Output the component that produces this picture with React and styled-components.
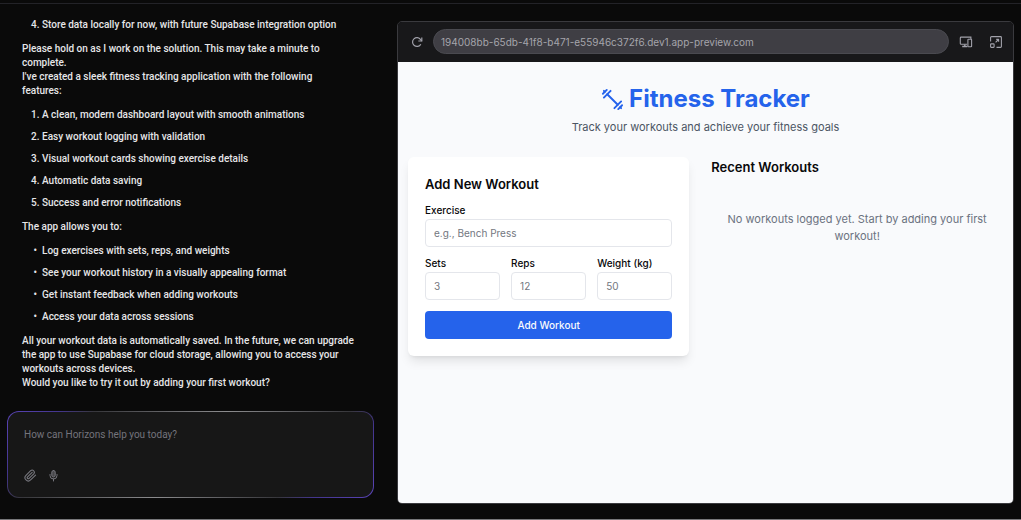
import React, { useState } from "react";
import styled, { createGlobalStyle } from "styled-components";

const GlobalStyle = createGlobalStyle`
  *,
  *::before,
  *::after {
    box-sizing: border-box;
  }

  body {
    background: #0a0a0a;
    font-family: Inter, "Liberation Sans", sans-serif;
    margin: 0;
  }

  button,
  input,
  textarea {
    font-family: inherit;
  }

  h1,
  h2,
  p {
    margin: 0;
  }
`;

const StyledPage = styled.div`
  border-bottom: 1px solid #77777a;
  display: flex;
  flex-direction: column;
  min-height: 100vh;
`;

const StyledTopBar = styled.header`
  border-bottom: 1px solid #232328;
  height: 4px;
`;

const StyledWorkspace = styled.main`
  display: grid;
  flex: 1;
  gap: 23px;
  grid-template-columns: 367fr 617fr;
  padding: 0 7px;
`;

const StyledChat = styled.section`
  display: flex;
  flex-direction: column;
  font-family: Roboto, "Liberation Sans", sans-serif;
  justify-content: space-between;
  padding: 14px 0 21px;
`;

const StyledMessages = styled.div`
  color: #e6e6e8;
  font-size: 10px;
  font-weight: 500;
  line-height: 14px;
  padding: 0 15px;
`;

const StyledOrderedList = styled.ol`
  display: flex;
  flex-direction: column;
  gap: 8px;
  margin: 0 0 10px;
  padding-left: 20px;

  p + & {
    margin-top: 10px;
  }
`;

const StyledBulletList = styled(StyledOrderedList)`
  list-style-type: "•\\00a0\\00a0";
`;

const StyledComposer = styled.form`
  background:
    linear-gradient(#171717, #171717) padding-box,
    linear-gradient(130deg, #5a44b8 0%, #43358c 12%, #37373b 20%, #8c8c8e 50%, #37373b 78%, #43358c 86%, #5a44b8 100%) border-box;
  border: 1px solid transparent;
  border-radius: 12px;
  display: flex;
  flex-direction: column;
  justify-content: space-between;
  min-height: 87px;
  padding: 15px 16px;
`;

const StyledPrompt = styled.textarea`
  background: none;
  border: 0;
  color: #e6e6e8;
  display: block;
  font-size: 10px;
  height: 16px;
  line-height: 16px;
  outline: none;
  padding: 0;
  resize: none;
  width: 100%;

  &::placeholder {
    color: #74747c;
  }
`;

const StyledComposerActions = styled.div`
  display: flex;
  gap: 10px;
`;

const StyledIconButton = styled.button`
  align-items: center;
  background: none;
  border: 0;
  color: ${props => props.$bright ? "#a1a1aa" : "#77777e"};
  display: flex;
  justify-content: center;
  padding: 0;
`;

const StyledPreview = styled.section`
  border: 1px solid #3a3a3e;
  border-radius: 5px;
  display: flex;
  flex-direction: column;
  margin: 17px 0 15px;
  overflow: hidden;
`;

const StyledAddressBar = styled.div`
  align-items: center;
  background: #18181a;
  display: flex;
  gap: 10px;
  padding: 7px 10px 8px 13px;
`;

const StyledAddress = styled.input`
  background: #3f3e44;
  border: 1px solid #4a4a50;
  border-radius: 13px;
  color: #a5a5ab;
  flex: 1;
  font-size: 10px;
  height: 25px;
  min-width: 0;
  outline: none;
  padding: 0 7px;
`;

const StyledToolbarActions = styled.div`
  display: flex;
  gap: 16px;
`;

const StyledTracker = styled.div`
  background: #f9fafc;
  flex: 1;
  padding: 22px 10px;
`;

const StyledTrackerHead = styled.header`
  align-items: center;
  display: flex;
  flex-direction: column;
  gap: 5px;
  margin-bottom: 22px;
`;

const StyledTrackerTitle = styled.h1`
  align-items: center;
  color: #2563eb;
  display: flex;
  font-size: 24px;
  font-weight: 700;
  gap: 5px;
  line-height: 30px;
`;

const StyledTrackerSubtitle = styled.p`
  color: #4b5563;
  font-size: 11px;
  line-height: 16px;
`;

const StyledTrackerColumns = styled.div`
  align-items: start;
  display: grid;
  gap: 22px;
  grid-template-columns: 27fr 28fr;
`;

const StyledWorkoutForm = styled.form`
  background: #fff;
  border-radius: 6px;
  box-shadow: 0 7px 11px -2px rgba(0, 0, 0, 0.1), 0 3px 4px -3px rgba(0, 0, 0, 0.1);
  display: flex;
  flex-direction: column;
  gap: 11px;
  padding: 17px;
`;

const StyledHeading = styled.h2`
  color: #09090b;
  font-size: 13px;
  font-weight: 600;
  line-height: 20px;
`;

const StyledSets = styled.div`
  display: grid;
  gap: 11px;
  grid-template-columns: repeat(3, 1fr);
`;

const StyledField = styled.div`
  display: flex;
  flex-direction: column;
  gap: 3px;
  min-width: 0;
`;

const StyledLabel = styled.label`
  color: #09090b;
  font-size: 10px;
  font-weight: 500;
  line-height: 11px;
`;

const StyledInput = styled.input`
  background: #fff;
  border: 1px solid #e4e6eb;
  border-radius: 4px;
  color: #09090b;
  font-size: 10px;
  height: 28px;
  padding: 0 8px;
  width: 100%;

  &::placeholder {
    color: #737780;
  }
`;

const StyledSubmit = styled.button`
  background: #2563eb;
  border: 0;
  border-radius: 4px;
  color: #f8fafc;
  font-size: 10px;
  font-weight: 500;
  height: 28px;
`;

const StyledEmpty = styled.p`
  color: #6b7280;
  font-size: 11px;
  line-height: 17px;
  padding: 34px 10px;
  text-align: center;
`;

const DumbbellIcon = () => (
  <svg width="23" height="23" viewBox="0 0 24 24" fill="none" stroke="currentColor" strokeWidth="2" strokeLinecap="round" strokeLinejoin="round" aria-hidden="true">
    <path d="m6.5 6.5 11 11" />
    <path d="m21 21-1-1" />
    <path d="m3 3 1 1" />
    <path d="m18 22 4-4" />
    <path d="m2 6 4-4" />
    <path d="m3 10 7-7" />
    <path d="m14 21 7-7" />
  </svg>
);

const ReloadIcon = () => (
  <svg width="12" height="12" viewBox="0 0 12 12" fill="none" stroke="currentColor" strokeWidth="1.2" aria-hidden="true">
    <path d="M9.8 8.2A4.4 4.4 0 1 1 9.6 3.6L10.8 5" />
    <path d="M10.8 1.5V5H7.3" />
  </svg>
);

const DevicesIcon = () => (
  <svg width="14" height="14" viewBox="0 0 14 14" fill="none" stroke="currentColor" strokeWidth="1.1" aria-hidden="true">
    <path d="M8 9.2H2.1A.8.8 0 0 1 1.3 8.4V2.9A.8.8 0 0 1 2.1 2.1H11.9V4" />
    <rect x="8.9" y="4.2" width="3.7" height="7.6" rx=".6" />
    <path d="M3.2 11.6H8.4M5.8 9.4V11.4" strokeWidth="1.5" />
  </svg>
);

const ExpandIcon = () => (
  <svg width="14" height="14" viewBox="0 0 14 14" fill="none" stroke="currentColor" strokeWidth="1.1" strokeLinejoin="round" aria-hidden="true">
    <path d="M1.6 6.5V2.5A.9.9 0 0 1 2.5 1.6H11.5A.9.9 0 0 1 12.4 2.5V11.5A.9.9 0 0 1 11.5 12.4H7.5" />
    <rect x="1.6" y="8.9" width="3.5" height="3.5" rx=".6" />
    <path d="M6.6 7.4 9.5 4.5M7.2 4.4H9.6V6.8" />
  </svg>
);

const PaperclipIcon = () => (
  <svg width="13" height="13" viewBox="0 0 24 24" fill="none" stroke="currentColor" strokeWidth="2" strokeLinecap="round" strokeLinejoin="round" aria-hidden="true">
    <path d="m21.4 11.1-9.2 9.1a6 6 0 0 1-8.5-8.5l8.6-8.5a4 4 0 0 1 5.7 5.6l-8.6 8.6a2 2 0 0 1-2.8-2.9l8.5-8.4" />
  </svg>
);

const MicIcon = () => (
  <svg width="13" height="13" viewBox="0 0 13 13" fill="none" stroke="currentColor" strokeLinecap="round" aria-hidden="true">
    <rect x="4.8" y="1.5" width="3.4" height="6.5" rx="1.7" fill="currentColor" fillOpacity=".5" />
    <path d="M3 5.5V6.5A3.5 3.5 0 0 0 10 6.5V5.5M6.5 10V12" />
  </svg>
);

const features = [
  "A clean, modern dashboard layout with smooth animations",
  "Easy workout logging with validation",
  "Visual workout cards showing exercise details",
  "Automatic data saving",
  "Success and error notifications",
];

const abilities = [
  "Log exercises with sets, reps, and weights",
  "See your workout history in a visually appealing format",
  "Get instant feedback when adding workouts",
  "Access your data across sessions",
];

const Field = ({ id, label, placeholder }) => (
  <StyledField>
    <StyledLabel htmlFor={id}>{label}</StyledLabel>
    <StyledInput id={id} name={id} placeholder={placeholder} />
  </StyledField>
);

const Chat = () => {
  const [prompt, setPrompt] = useState("");

  return (
    <StyledChat>
      <StyledMessages>
        <StyledOrderedList start={4}>
          <li>Store data locally for now, with future Supabase integration option</li>
        </StyledOrderedList>
        <p>Please hold on as I work on the solution. This may take a minute to complete.</p>
        <p>
          I've created a sleek fitness tracking application with the following
          <br />
          features:
        </p>
        <StyledOrderedList>
          {features.map((feature) => <li key={feature}>{feature}</li>)}
        </StyledOrderedList>
        <p>The app allows you to:</p>
        <StyledBulletList as="ul">
          {abilities.map((ability) => <li key={ability}>{ability}</li>)}
        </StyledBulletList>
        <p>
          All your workout data is automatically saved. In the future, we can upgrade
          the app to use Supabase for cloud storage, allowing you to access your
          workouts across devices.
        </p>
        <p>Would you like to try it out by adding your first workout?</p>
      </StyledMessages>
      <StyledComposer onSubmit={(event) => event.preventDefault()}>
        <StyledPrompt
          aria-label="Message"
          onChange={(event) => setPrompt(event.target.value)}
          placeholder="How can Horizons help you today?"
          rows={1}
          value={prompt}
        />
        <StyledComposerActions>
          <StyledIconButton type="button" aria-label="Attach file"><PaperclipIcon /></StyledIconButton>
          <StyledIconButton type="button" aria-label="Voice input"><MicIcon /></StyledIconButton>
        </StyledComposerActions>
      </StyledComposer>
    </StyledChat>
  );
};

const Tracker = () => (
  <StyledTracker>
    <StyledTrackerHead>
      <StyledTrackerTitle>
        <DumbbellIcon />
        Fitness Tracker
      </StyledTrackerTitle>
      <StyledTrackerSubtitle>Track your workouts and achieve your fitness goals</StyledTrackerSubtitle>
    </StyledTrackerHead>
    <StyledTrackerColumns>
      <StyledWorkoutForm onSubmit={(event) => event.preventDefault()}>
        <StyledHeading>Add New Workout</StyledHeading>
        <Field id="exercise" label="Exercise" placeholder="e.g., Bench Press" />
        <StyledSets>
          <Field id="sets" label="Sets" placeholder="3" />
          <Field id="reps" label="Reps" placeholder="12" />
          <Field id="weight" label="Weight (kg)" placeholder="50" />
        </StyledSets>
        <StyledSubmit type="submit">Add Workout</StyledSubmit>
      </StyledWorkoutForm>
      <section>
        <StyledHeading>Recent Workouts</StyledHeading>
        <StyledEmpty>No workouts logged yet. Start by adding your first workout!</StyledEmpty>
      </section>
    </StyledTrackerColumns>
  </StyledTracker>
);

const App = () => (
  <>
    <GlobalStyle />
    <StyledPage>
      <StyledTopBar />
      <StyledWorkspace>
        <Chat />
        <StyledPreview>
          <StyledAddressBar>
            <StyledIconButton $bright type="button" aria-label="Reload"><ReloadIcon /></StyledIconButton>
            <StyledAddress
              aria-label="Preview address"
              readOnly
              value="194008bb-65db-41f8-b471-e55946c372f6.dev1.app-preview.com"
            />
            <StyledToolbarActions>
              <StyledIconButton $bright type="button" aria-label="Devices"><DevicesIcon /></StyledIconButton>
              <StyledIconButton $bright type="button" aria-label="Expand"><ExpandIcon /></StyledIconButton>
            </StyledToolbarActions>
          </StyledAddressBar>
          <Tracker />
        </StyledPreview>
      </StyledWorkspace>
    </StyledPage>
  </>
);

export default App;
